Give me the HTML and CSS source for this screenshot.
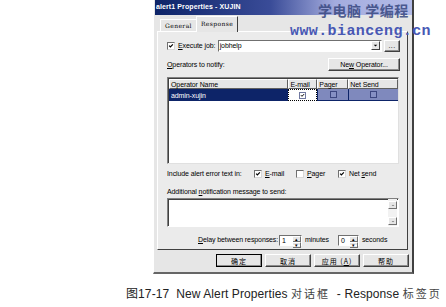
FILE: index.html
```html
<!DOCTYPE html>
<html lang="zh-CN">
<head>
    <meta charset="UTF-8">
    <title>New Alert Properties - Response</title>
    <link rel="stylesheet" href="styles.css">
</head>
<body>
    <div class="page">
        <div class="dialog">
            <div class="titlebar">alert1 Properties - XUJIN</div>
            <div class="tabs">
                <span class="tab">General</span>
                <span class="tab active">Response</span>
            </div>
            <div class="panel">
                <div class="row job">
                    <span class="check on"><svg viewBox="0 0 8 8"><path d="M1.5 3.5 L3.2 5.3 L6.5 1.8" /></svg></span>
                    <span class="label"><u>E</u>xecute job:</span>
                    <div class="combo">
                        <span class="combo-text">jobhelp</span>
                        <span class="combo-arrow"><svg viewBox="0 0 7 4"><path d="M1 1 L6 1 L3.5 3.5 Z" /></svg></span>
                    </div>
                    <span class="btn small">...</span>
                </div>

                <div class="row ops">
                    <span class="label"><u>O</u>perators to notify:</span>
                    <span class="btn wide"><span>Ne<u>w</u> Operator...</span></span>
                </div>

                <div class="grid">
                    <div class="grid-head">
                        <span class="col name">Operator Name</span>
                        <span class="col mail">E-mail</span>
                        <span class="col pager">Pager</span>
                        <span class="col net">Net Send</span>
                    </div>
                    <div class="grid-row">
                        <span class="col name sel">admin-xujin</span>
                        <span class="col mail focus"><span class="check on tiny"><svg viewBox="0 0 8 8"><path d="M1.5 3.5 L3.2 5.3 L6.5 1.8" /></svg></span></span>
                        <span class="col pager dim"><span class="check tiny"></span></span>
                        <span class="col net dim"><span class="check tiny"></span></span>
                    </div>
                </div>

                <div class="row include">
                    <span class="label inc-label">Include alert error text in:</span>
                    <span class="opt"><span class="check on"><svg viewBox="0 0 8 8"><path d="M1.5 3.5 L3.2 5.3 L6.5 1.8" /></svg></span><span><u>E</u>-mail</span></span>
                    <span class="opt"><span class="check"></span><span><u>P</u>ager</span></span>
                    <span class="opt"><span class="check on"><svg viewBox="0 0 8 8"><path d="M1.5 3.5 L3.2 5.3 L6.5 1.8" /></svg></span><span>Net <u>s</u>end</span></span>
                </div>

                <div class="msg-label">Additional <u>n</u>otification message to send:</div>
                <div class="textarea">
                    <div class="vscroll">
                        <span class="arrow"><svg viewBox="0 0 7 4"><path d="M1 3 L6 3 L3.5 0.5 Z" /></svg></span>
                        <span class="arrow"><svg viewBox="0 0 7 4"><path d="M1 1 L6 1 L3.5 3.5 Z" /></svg></span>
                    </div>
                </div>

                <div class="row delay">
                    <span class="label"><u>D</u>elay between responses:</span>
                    <span class="spin"><span class="spin-val">1</span><span class="spin-btns"><i>▴</i><i>▾</i></span></span>
                    <span class="label">minutes</span>
                    <span class="spin second"><span class="spin-val">0</span><span class="spin-btns"><i>▴</i><i>▾</i></span></span>
                    <span class="label">seconds</span>
                </div>
            </div>

            <div class="buttons">
                <span class="btn dlg default">确定</span>
                <span class="btn dlg">取消</span>
                <span class="btn dlg"><span>应用 (<u>A</u>)</span></span>
                <span class="btn dlg">帮助</span>
            </div>
        </div>

        <p class="caption">图17-17&nbsp; New Alert Properties <span class="cjk">对话框</span>&nbsp; - Response <span class="cjk">标签页</span></p>

        <div class="watermark">
            <div class="wm-cn">学电脑 学编程</div>
            <div class="wm-url">www.bianceng.cn</div>
        </div>
    </div>
</body>
</html>
```

FILE: styles.css
```css
:root {
    --face: #e6e6e6;
    --shadow: #8c8c8c;
    --dark: #404040;
    --navy: #0d2468;
}

* {
    box-sizing: border-box;
    margin: 0;
    padding: 0;
}

body {
    background: #fff;
    font-family: 'Liberation Sans', Arial, sans-serif;
    color: #000;
    width: 446px;
    height: 307px;
    overflow: hidden;
}

.page {
    position: relative;
    padding-left: 153px;
}

u {
    text-decoration: underline;
    text-underline-offset: 1px;
}

/* dialog frame */
.dialog {
    width: 261px;
    height: 274px;
    background: var(--face);
    border-left: 1px solid #fff;
    border-right: 2px solid var(--dark);
    border-bottom: 2px solid #666;
    font-size: 7px;
    line-height: 10px;
    letter-spacing: -0.1px;
}

.titlebar {
    height: 15px;
    margin: 0 0 0 1px;
    padding-left: 1px;
    background: linear-gradient(to right, var(--navy) 0%, #3a4c98 45%, #a4acde 70%, #b4bce8 100%);
    color: #fff;
    font-weight: bold;
    font-size: 7px;
    line-height: 14px;
    letter-spacing: 0.1px;
}

.tabs {
    display: flex;
    align-items: flex-end;
    height: 16px;
    padding-left: 6px;
    font-family: 'DejaVu Serif', 'Liberation Serif', serif;
    font-size: 6px;
    letter-spacing: 0.4px;
}

.tab {
    height: 13px;
    padding: 0 4px;
    line-height: 12px;
    border-top: 1px solid #fff;
    border-left: 1px solid #fff;
    border-right: 1px solid var(--dark);
    margin-bottom: -1px;
}

.tab.active {
    height: 16px;
    line-height: 14px;
    background: var(--face);
    position: relative;
    z-index: 1;
    margin-left: -1px;
}

.panel {
    margin: 0 4px 0 3px;
    height: 219px;
    padding: 7px 7px 0 9px;
    border-top: 1px solid #fff;
    border-left: 1px solid #fff;
    border-right: 1px solid var(--dark);
    border-bottom: 1px solid var(--dark);
    background: #ebebeb;
}

.row {
    display: flex;
    align-items: center;
}

/* checkbox */
.check {
    display: inline-block;
    flex: none;
    width: 8px;
    height: 8px;
    background: #fff;
    border-top: 1px solid #707070;
    border-left: 1px solid #707070;
    border-right: 1px solid #d8d8d8;
    border-bottom: 1px solid #d8d8d8;
}

.check svg {
    display: block;
    width: 6px;
    height: 6px;
    fill: none;
    stroke: #000;
    stroke-width: 1.6;
}

.check.tiny {
    width: 7px;
    height: 7px;
    border: 1px solid #7078a0;
}

.check.tiny svg {
    width: 5px;
    height: 5px;
}

.job {
    height: 13px;
}

.job .label {
    margin-left: 3px;
    width: 40px;
}

.combo {
    display: flex;
    align-items: center;
    width: 166px;
    height: 12px;
    background: #fff;
    border-top: 1px solid #707070;
    border-left: 1px solid #707070;
    border-right: 1px solid #fff;
    border-bottom: 1px solid #fff;
}

.combo-text {
    flex: 1;
    padding-left: 1px;
}

.combo-arrow {
    width: 9px;
    height: 9px;
    margin-right: 1px;
    background: var(--face);
    border-right: 1px solid var(--dark);
    border-bottom: 1px solid var(--dark);
    border-top: 1px solid #fff;
    border-left: 1px solid #fff;
    display: flex;
    align-items: center;
    justify-content: center;
}

.combo-arrow svg {
    width: 5px;
    height: 3px;
    fill: #000;
}

/* buttons */
.btn {
    display: inline-flex;
    align-items: center;
    justify-content: center;
    height: 12px;
    background: var(--face);
    border-top: 1px solid #fff;
    border-left: 1px solid #fff;
    border-right: 1px solid var(--dark);
    border-bottom: 1px solid var(--dark);
    box-shadow: inset -1px -1px 0 var(--shadow);
}

.btn.small {
    width: 16px;
    margin-left: 2px;
    letter-spacing: 0.5px;
}

.ops {
    height: 13px;
    margin-top: 6px;
    justify-content: space-between;
}

.btn.wide {
    width: 72px;
    height: 13px;
}

/* operator grid */
.grid {
    margin-top: 6px;
    width: 232px;
    height: 87px;
    background: #fff;
    border-top: 1px solid #808080;
    border-left: 1px solid #808080;
    border-right: 1px solid #e0e0e0;
    border-bottom: 1px solid #e0e0e0;
    box-shadow: inset 1px 1px 0 var(--dark);
}

.grid-head,
.grid-row {
    display: flex;
}

.grid-head {
    height: 10px;
    margin: 1px 0 0 1px;
    background: var(--face);
    line-height: 9px;
}

.grid-head .col {
    border-right: 1px solid #606060;
    border-bottom: 1px solid #606060;
    border-top: 1px solid #fff;
    border-left: 1px solid #fff;
    padding-left: 1px;
}

.col.name { width: 120px; }
.col.mail { width: 29px; }
.col.pager { width: 31px; }
.col.net { width: 50px; }

.grid-row {
    height: 12px;
    margin-left: 1px;
    line-height: 11px;
}

.grid-row .col {
    display: flex;
    align-items: center;
}

.col.sel {
    background: var(--navy);
    color: #fff;
    padding-left: 2px;
}

.col.focus {
    justify-content: center;
    border: 1px dotted #000;
    background: #fff;
}

.col.dim {
    justify-content: center;
    background: #7f89bd;
    border-left: 1px solid var(--navy);
    border-bottom: 1px solid var(--navy);
}

.col.dim .check {
    background: #8690c4;
    border-color: #3c4680;
}

/* include row */
.include {
    margin-top: 5px;
    height: 10px;
}

.inc-label {
    width: 87px;
}

.opt {
    display: flex;
    align-items: center;
    gap: 3px;
    width: 42px;
}

.msg-label {
    margin-top: 8px;
    height: 10px;
}

.textarea {
    margin-top: 1px;
    width: 232px;
    height: 29px;
    background: #fff;
    border-top: 1px solid #808080;
    border-left: 1px solid #808080;
    border-right: 1px solid #fff;
    border-bottom: 1px solid #fff;
    box-shadow: inset 1px 1px 0 var(--dark);
    display: flex;
    justify-content: flex-end;
}

.vscroll {
    width: 9px;
    background: #f2f2f2;
    display: flex;
    flex-direction: column;
    justify-content: space-between;
    padding: 2px 0 1px;
    margin-right: 1px;
}

.arrow {
    width: 9px;
    height: 8px;
    background: var(--face);
    border-top: 1px solid #fff;
    border-left: 1px solid #fff;
    border-right: 1px solid #707070;
    border-bottom: 1px solid #707070;
    display: flex;
    align-items: center;
    justify-content: center;
}

.arrow svg {
    width: 4px;
    height: 3px;
    fill: #808080;
}

/* delay row */
.delay {
    margin-top: 7px;
    height: 12px;
    padding-left: 31px;
}

.spin {
    display: flex;
    width: 23px;
    height: 11px;
    margin: 0 3px 0 1px;
    background: #fff;
    border-top: 1px solid #707070;
    border-left: 1px solid #707070;
    border-right: 1px solid #fff;
    border-bottom: 1px solid #fff;
}

.spin.second {
    width: 21px;
    margin-left: 9px;
}

.spin-val {
    flex: 1;
    padding-left: 2px;
    line-height: 9px;
}

.spin-btns {
    width: 8px;
    display: flex;
    flex-direction: column;
    background: var(--face);
}

.spin-btns i {
    flex: 1;
    font-style: normal;
    font-size: 5px;
    line-height: 4px;
    text-align: center;
    border-top: 1px solid #fff;
    border-right: 1px solid #707070;
    border-bottom: 1px solid #707070;
}

/* dialog buttons */
.buttons {
    display: flex;
    justify-content: flex-end;
    gap: 3px;
    margin-top: 4px;
    padding-right: 3px;
}

.btn.dlg {
    width: 46px;
    height: 13px;
    font-family: 'Noto Sans CJK SC', sans-serif;
    font-size: 7px;
    letter-spacing: 1px;
}

.btn.default {
    outline: 1px solid #000;
    outline-offset: -1px;
}

.caption {
    margin: 12px 0 0 -27px;
    font-size: 12px;
    line-height: 14px;
    color: #222;
    letter-spacing: 0.1px;
}

.caption .cjk {
    font-family: 'Noto Sans CJK SC', sans-serif;
    font-size: 11px;
    color: #444;
    letter-spacing: 2px;
}

/* site watermark laid over the screenshot */
.watermark {
    position: absolute;
    top: 2px;
    left: 290px;
    width: 150px;
    color: #3c4d9c;
    pointer-events: none;
}

.wm-cn {
    margin-left: 28px;
    font-family: 'Noto Sans CJK SC', sans-serif;
    font-weight: bold;
    font-size: 14px;
    line-height: 16px;
    color: #384880;
    letter-spacing: 0.5px;
    opacity: 0.85;
}

.wm-url {
    margin-top: 6px;
    font-family: 'Liberation Mono', monospace;
    font-weight: bold;
    font-size: 15px;
    line-height: 16px;
    color: #4858b4;
    letter-spacing: 0.4px;
}
```
